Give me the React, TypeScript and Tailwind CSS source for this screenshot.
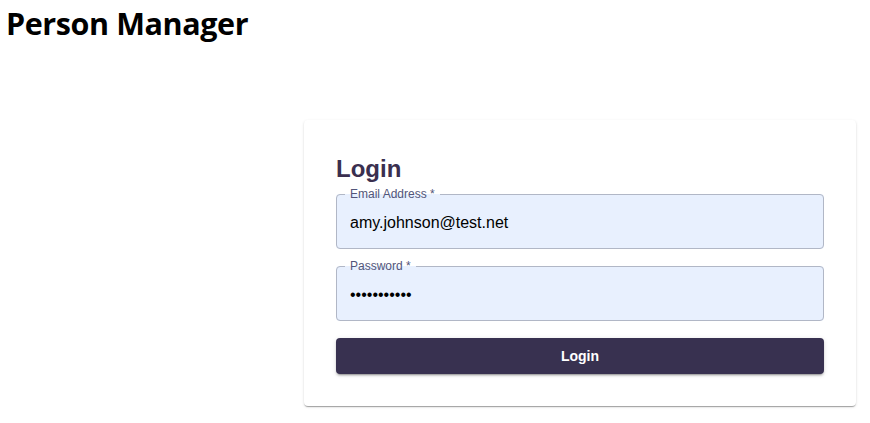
import React from "react";

function Field({ label, type, value }: { label: string; type: string; value: string }) {
  return (
    <div className="relative h-[55px]">
      <input
        type={type}
        defaultValue={value}
        readOnly
        className="h-full w-full rounded-[4px] bg-[#e8f0fe] px-[14px] pt-[2px] text-[16px] text-black outline-none font-['Liberation_Sans',Arial,sans-serif]"
      />
      <fieldset className="pointer-events-none absolute inset-0 -top-[6px] m-0 rounded-[4px] border border-[#b1b7c6] px-[8px]">
        <legend className="px-[5px] text-[12px] leading-[12px] text-[#52557a] font-['Liberation_Sans',Arial,sans-serif]">
          {label}
        </legend>
      </fieldset>
    </div>
  );
}

export default function App() {
  return (
    <div className="min-h-[423px] bg-white">
      <h1 className="m-0 pl-[6px] pt-[1px] text-[30.5px] font-bold leading-[44px] text-black font-['Open_Sans',sans-serif] tracking-[-0.4px]">
        Person Manager
      </h1>
      <div className="mt-[75px] flex pl-[304px]">
        <div className="w-[552px] rounded-[4px] bg-white p-[32px] shadow-[0_2px_1px_-1px_rgba(0,0,0,0.2),0_1px_1px_0_rgba(0,0,0,0.14),0_1px_3px_0_rgba(0,0,0,0.12)]">
          <h2 className="mt-[3px] text-[24px] font-bold leading-[28px] text-[#3a2f4f] font-['Liberation_Sans',Arial,sans-serif]">
            Login
          </h2>
          <div className="mt-[11px] flex flex-col gap-[17px]">
            <Field label="Email Address *" type="email" value="amy.johnson@test.net" />
            <Field label="Password *" type="password" value="password123" />
          </div>
          <button className="mt-[17px] h-[36px] w-full rounded-[4px] bg-[#383150] text-[14px] font-bold text-white shadow-[0_3px_1px_-2px_rgba(0,0,0,0.2),0_2px_2px_0_rgba(0,0,0,0.14),0_1px_5px_0_rgba(0,0,0,0.12)] font-['Liberation_Sans',Arial,sans-serif]">
            Login
          </button>
        </div>
      </div>
    </div>
  );
}
